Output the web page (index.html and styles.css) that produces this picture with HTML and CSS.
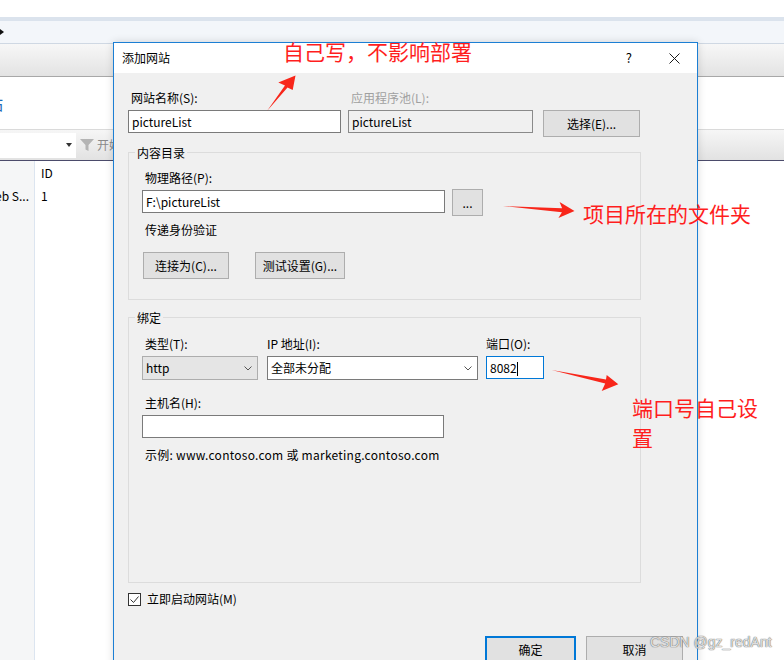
FILE: index.html
```html
<!DOCTYPE html>
<html lang="zh-CN">
<head>
    <meta charset="UTF-8">
    <meta name="viewport" content="width=device-width, initial-scale=1.0">
    <title>添加网站</title>
    <link rel="stylesheet" href="styles.css">
</head>
<body>
<div class="screen">
    <!-- IIS manager window behind the dialog -->
    <div class="app">
        <div class="topgap"></div>
        <div class="addrbar"><span class="crumb"></span></div>
        <div class="menubar"></div>
        <div class="pane-head"><span class="pane-title">站</span></div>
        <div class="toolbar">
            <div class="filter-box"><span class="drop"></span></div>
            <svg class="funnel" width="14" height="12" viewBox="0 0 14 12">
                <path d="M0 0h14l-5.5 6v6l-3-1.5v-4.5z" fill="#b4b4b4"/>
            </svg>
            <span class="tool-text">开始(G)</span>
        </div>
        <div class="list">
            <div class="col-name">
                <div class="cell"></div>
                <div class="cell">Default Web S...</div>
            </div>
            <div class="col-id">
                <div class="cell">ID</div>
                <div class="cell">1</div>
            </div>
        </div>
    </div>

    <div class="dialog">
        <div class="dlg-title">
            <span class="dlg-caption">添加网站</span>
            <span class="dlg-help">?</span>
            <svg class="dlg-close" width="11" height="11" viewBox="0 0 11 11">
                <path d="M0.5 0.5l10 10M10.5 0.5l-10 10" stroke="#1a1a1a" stroke-width="1"/>
            </svg>
        </div>
        <div class="dlg-body">
            <div class="site-row">
                <div class="field w-name">
                    <div class="lbl">网站名称(S):</div>
                    <div class="textbox">pictureList</div>
                </div>
                <div class="field w-pool">
                    <div class="lbl muted">应用程序池(L):</div>
                    <div class="textbox readonly">pictureList</div>
                </div>
                <button class="btn btn-select">选择(E)...</button>
            </div>

            <div class="group g-content">
                <div class="group-title">内容目录</div>
                <div class="lbl">物理路径(P):</div>
                <div class="path-row">
                    <div class="textbox w-path">F:\pictureList</div>
                    <button class="btn btn-dots">...</button>
                </div>
                <div class="lbl auth-lbl">传递身份验证</div>
                <div class="auth-row">
                    <button class="btn btn-connect">连接为(C)...</button>
                    <button class="btn btn-test">测试设置(G)...</button>
                </div>
            </div>

            <div class="group g-binding">
                <div class="group-title">绑定</div>
                <div class="bind-row">
                    <div class="field w-type">
                        <div class="lbl">类型(T):</div>
                        <div class="combo">
                            <span>http</span>
                            <svg width="8" height="5" viewBox="0 0 8 5"><polyline points="0.5,0.5 4,4 7.5,0.5" fill="none" stroke="#555" stroke-width="1"/></svg>
                        </div>
                    </div>
                    <div class="field w-ip">
                        <div class="lbl flush">IP 地址(I):</div>
                        <div class="combo editable">
                            <span>全部未分配</span>
                            <svg width="8" height="5" viewBox="0 0 8 5"><polyline points="0.5,0.5 4,4 7.5,0.5" fill="none" stroke="#555" stroke-width="1"/></svg>
                        </div>
                    </div>
                    <div class="field w-port">
                        <div class="lbl flush">端口(O):</div>
                        <div class="textbox focused">8082<span class="caret"></span></div>
                    </div>
                </div>
                <div class="lbl host-lbl">主机名(H):</div>
                <div class="textbox w-host"></div>
                <div class="lbl example">示例: www.contoso.com 或 marketing.contoso.com</div>
            </div>

            <div class="check-row">
                <span class="checkbox">
                    <svg width="11" height="11" viewBox="0 0 11 11"><polyline points="1.5,5.5 4.5,8.5 9.5,2.5" fill="none" stroke="#333" stroke-width="1"/></svg>
                </span>
                <span>立即启动网站(M)</span>
            </div>

            <div class="dlg-buttons">
                <button class="btn btn-ok">确定</button>
                <button class="btn btn-cancel">取消</button>
            </div>
        </div>
    </div>

    <!-- red notes drawn over the screenshot -->
    <svg class="arrows" width="784" height="660" viewBox="0 0 784 660">
        <polygon points="267,111 287.5,87.5 292.7,90 295.5,75.5 278.3,82.5 285,85.5" fill="#f8261a"/>
        <polygon points="503,206 561.9,212.2 558.4,217.9 574.5,211 559.6,202 562.1,208.2" fill="#f8261a"/>
        <polygon points="551.7,370 605.2,383.6 601.7,391 618.3,384.3 606.7,375 606,379.6" fill="#f8261a"/>
    </svg>
    <div class="note note-write">自己写，不影响部署</div>
    <div class="note note-folder">项目所在的文件夹</div>
    <div class="note note-port">端口号自己设<br>置</div>

    <div class="watermark">CSDN @gz_redAnt</div>
</div>
</body>
</html>
```

FILE: styles.css
```css
* {
    margin: 0;
    padding: 0;
    box-sizing: border-box;
}

body {
    width: 784px;
    height: 660px;
    overflow: hidden;
    background: #ffffff;
    font-family: "Noto Sans CJK SC", sans-serif;
    font-size: 12px;
    line-height: 16px;
    color: #000;
}

button {
    font: inherit;
    color: inherit;
}

.screen {
    position: relative;
    width: 784px;
    height: 660px;
    overflow: hidden;
}

/* ---------- background window ---------- */

.topgap {
    height: 17px;
}

.addrbar {
    height: 27px;
    border-top: 4px solid #dbe3ed;
    border-bottom: 1px solid #cfd8e3;
    background: #f3f6fa;
    display: flex;
    align-items: center;
}

.crumb {
    width: 0;
    height: 0;
    border-left: 4px solid #111;
    border-top: 3px solid transparent;
    border-bottom: 3px solid transparent;
}

.menubar {
    height: 33px;
    background: linear-gradient(#f7f7f7, #e3e3e3);
    border-bottom: 1px solid #a8a8a8;
}

.pane-head {
    height: 52px;
    padding-top: 16px;
}

.pane-title {
    display: inline-block;
    margin-left: -13px;
    font-size: 16px;
    line-height: 20px;
    color: #1e6bb8;
}

.toolbar {
    height: 32px;
    border-top: 1px solid #dadada;
    border-bottom: 1px solid #4b4b6b;
    background: linear-gradient(#f6f6f6, #e2e2e2);
    display: flex;
    align-items: center;
}

.filter-box {
    width: 76px;
    height: 25px;
    background: #fff;
    display: flex;
    justify-content: flex-end;
    align-items: center;
    padding-right: 4px;
}

.drop {
    width: 0;
    height: 0;
    border-top: 4px solid #333;
    border-left: 3px solid transparent;
    border-right: 3px solid transparent;
}

.funnel {
    margin-left: 4px;
}

.tool-text {
    margin-left: 3px;
    color: #8a8a8a;
    white-space: nowrap;
}

.list {
    display: flex;
    height: 500px;
}

.col-name {
    width: 35px;
    background: #f5f6f7;
    border-right: 1px solid #dce5f0;
}

.col-id {
    flex: 1;
}

.cell {
    height: 23px;
    line-height: 23px;
    white-space: nowrap;
}

.col-name .cell {
    display: flex;
    justify-content: flex-end;
    padding-right: 5px;
    overflow: hidden;
}

.col-id .cell {
    padding-left: 6px;
}

/* ---------- dialog ---------- */

.dialog {
    position: absolute;
    left: 113px;
    top: 42px;
    width: 585px;
    height: 640px;
    border: 1px solid #1c7fd4;
    background: #f0f0f0;
    box-shadow: 0 0 8px rgba(0, 0, 0, 0.15);
}

.dlg-title {
    height: 30px;
    background: #fff;
    display: flex;
    align-items: center;
    padding-left: 8px;
}

.dlg-caption {
    flex: 1;
}

.dlg-help {
    font-size: 13px;
    margin-right: 37px;
}

.dlg-close {
    margin-right: 17px;
}

.dlg-body {
    padding: 17px 14px 0 14px;
}

.lbl {
    padding-left: 3px;
    margin-bottom: 4px;
    white-space: nowrap;
}

.lbl.muted {
    color: #a0a0a0;
}

.lbl.flush {
    padding-left: 0;
}

.textbox {
    height: 23px;
    border: 1px solid #7a7a7a;
    background: #fff;
    padding-left: 3px;
    line-height: 21px;
    white-space: nowrap;
}

.textbox.readonly {
    background: #f0f0f0;
    border-color: #8a8a8a;
}

.textbox.focused {
    border-color: #0078d7;
}

.caret {
    display: inline-block;
    width: 1px;
    height: 14px;
    background: #000;
    vertical-align: -3px;
}

.btn {
    height: 27px;
    border: 1px solid #adadad;
    background: #e1e1e1;
    text-align: center;
    flex-shrink: 0;
}

.site-row {
    display: flex;
    align-items: flex-start;
}

.w-name {
    width: 213px;
}

.w-pool {
    width: 185px;
    margin-left: 7px;
}

.btn-select {
    width: 97px;
    margin-left: 10px;
    margin-top: 20px;
}

.group {
    width: 513px;
    border: 1px solid #dcdcdc;
    padding-left: 13px;
}

.group-title {
    width: fit-content;
    margin: -8px 0 9px -7px;
    padding: 0 2px;
    background: #f0f0f0;
}

.g-content {
    height: 148px;
    margin-top: 15px;
}

.path-row {
    display: flex;
    align-items: flex-start;
}

.w-path {
    width: 303px;
}

.btn-dots {
    width: 31px;
    margin-left: 7px;
    margin-top: -1px;
}

.auth-lbl {
    margin-top: 6px;
    margin-bottom: 0;
}

.auth-row {
    display: flex;
    margin-top: 14px;
}

.btn-connect {
    width: 86px;
    margin-left: 1px;
}

.btn-test {
    width: 90px;
    margin-left: 26px;
}

.g-binding {
    height: 266px;
    margin-top: 17px;
}

.g-binding .group-title {
    margin-bottom: 10px;
}

.bind-row {
    display: flex;
    align-items: flex-start;
}

.w-type {
    width: 116px;
}

.w-ip {
    width: 211px;
    margin-left: 9px;
}

.w-port {
    width: 58px;
    margin-left: 8px;
}

.combo {
    height: 24px;
    border: 1px solid #adadad;
    background: #e5e5e5;
    display: flex;
    justify-content: space-between;
    align-items: center;
    padding: 0 5px 0 3px;
}

.combo.editable {
    background: #fff;
    border-color: #7a7a7a;
}

.host-lbl {
    margin-top: 15px;
}

.w-host {
    width: 302px;
}

.example {
    margin-top: 9px;
    letter-spacing: 0.25px;
}

.check-row {
    display: flex;
    align-items: center;
    height: 16px;
    margin-top: 8px;
}

.checkbox {
    width: 13px;
    height: 13px;
    border: 1px solid #333;
    background: #fff;
    margin-right: 6px;
    display: flex;
}

.dlg-buttons {
    display: flex;
    justify-content: flex-end;
    margin-top: 29px;
}

.btn-ok {
    width: 91px;
    border: 2px solid #0078d7;
}

.btn-cancel {
    width: 97px;
    margin-left: 10px;
}

/* ---------- annotations ---------- */

.arrows {
    position: absolute;
    left: 0;
    top: 0;
}

.note {
    position: absolute;
    font-size: 21px;
    line-height: 21px;
    color: #ff1e1e;
    white-space: nowrap;
}

.note-write {
    left: 283px;
    top: 41px;
}

.note-folder {
    left: 583px;
    top: 203px;
}

.note-port {
    left: 632px;
    top: 392px;
    line-height: 30px;
}

.watermark {
    position: absolute;
    left: 650px;
    top: 633px;
    font-family: "Liberation Sans", sans-serif;
    font-size: 14px;
    line-height: 18px;
    color: rgba(255, 255, 255, 0.8);
    text-shadow: 0 0 1px #666, 0 0 1px #666;
    white-space: nowrap;
}
```
